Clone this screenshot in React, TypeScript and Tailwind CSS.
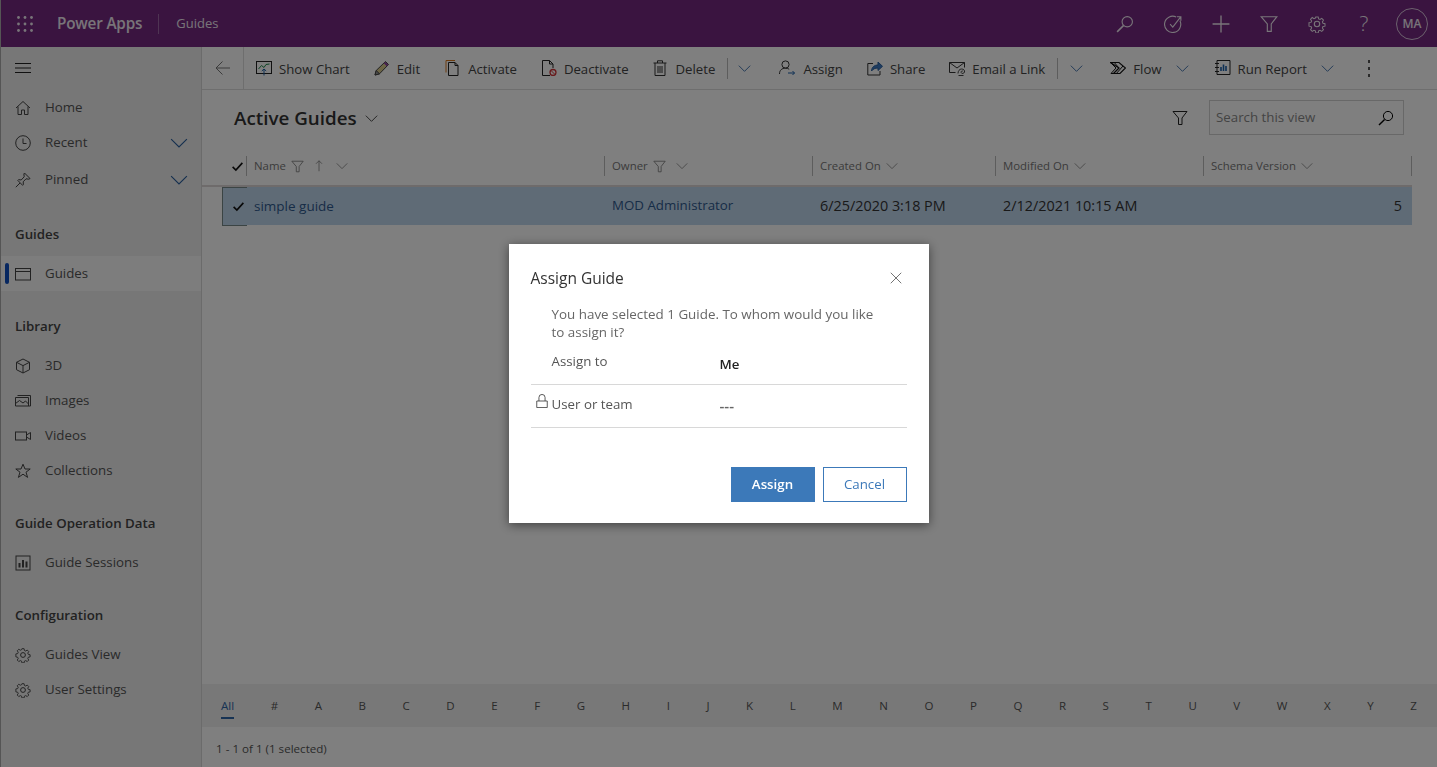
import { ReactNode } from 'react'

const FONT = { fontFamily: '"Open Sans", "Noto Sans", sans-serif' }

function Icon({ size = 16, box = 16, className = '', children }: { size?: number; box?: number; className?: string; children: ReactNode }) {
  return (
    <svg width={size} height={size} viewBox={`0 0 ${box} ${box}`} fill="none" stroke="currentColor" strokeWidth="1" className={`shrink-0 ${className}`}>
      {children}
    </svg>
  )
}

const Chevron = ({ size = 13, className = '' }: { size?: number; className?: string }) => (
  <Icon size={size} className={className}><path d="M1 4.5 8 11.5 15 4.5" /></Icon>
)
const Funnel = ({ size = 14, className = '' }: { size?: number; className?: string }) => (
  <Icon size={size} className={className}><path d="M1 1.5h14L10 8v6.5H6.5V8z" /></Icon>
)
const Gear = ({ size = 16 }: { size?: number }) => (
  <Icon size={size}>
    <circle cx="8" cy="8" r="2.4" />
    <path d="M6.8 1h2.4l.4 2 1.4.6 1.7-1.1 1.7 1.7-1.1 1.7.6 1.4 2 .4v2.4l-2 .4-.6 1.4 1.1 1.7-1.7 1.7-1.7-1.1-1.4.6-.4 2H6.8l-.4-2-1.4-.6-1.7 1.1-1.7-1.7 1.1-1.7-.6-1.4-2-.4V6.8l2-.4.6-1.4-1.1-1.7 1.7-1.7 1.7 1.1 1.4-.6z" transform="translate(.8 .8) scale(.9)" />
  </Icon>
)
const Lens = ({ size = 18 }: { size?: number }) => (
  <Icon size={size}><circle cx="10" cy="6" r="4.6" /><path d="M6.6 9.4 1 15" strokeWidth="1.4" /></Icon>
)

const sideIcons: Record<string, ReactNode> = {
  home: <Icon><path d="M1 8 8 1.5 15 8M3 6.5V14.5H6.5V10H9.5V14.5H13V6.5" /></Icon>,
  clock: <Icon><circle cx="8" cy="8" r="7.3" /><path d="M8 3.5V8.5H11.5" /></Icon>,
  pin: <Icon><path d="M9.5 1 15 6.5 13.8 7.2 11 6.8 8.2 9.8 8.4 12.6 7.6 13.3 2.8 8.4 3.6 7.6 6.2 8 9.2 4.8 8.9 2zM5 11 .8 15.2" /></Icon>,
  window: <Icon><rect x=".5" y="2.5" width="15" height="11.5" /><path d="M.5 5.5h15" /></Icon>,
  cube: <Icon><path d="M8 1 14.5 4.3V11.7L8 15 1.5 11.7V4.3zM1.5 4.3 8 7.6 14.5 4.3M8 7.6V15" /></Icon>,
  images: <Icon><path d="M2.5 2.5h13V13H.5V4.5h13v8.5M.5 10.5 4.5 7.5 8 10 10.5 8 13.5 11" /></Icon>,
  video: <Icon><rect x=".5" y="4" width="11" height="8" /><path d="M11.5 7 15.5 4.5V11.5L11.5 9" /></Icon>,
  star: <Icon><path d="M8 1.2 10 6h5.2l-4.2 3.2 1.6 5.2L8 11.2l-4.6 3.2L5 9.2.8 6H6z" /></Icon>,
  chart: <Icon><rect x="1" y="1" width="14" height="14" /><path d="M4.5 12.5V8M8 12.5V5M11.5 12.5V6.5" strokeWidth="2" /></Icon>,
  gear: <Gear />,
}

function SideItem({ icon, label, chevron, active }: { icon: string; label: string; chevron?: boolean; active?: boolean }) {
  return (
    <div className={`relative flex h-[35px] items-center pl-[14px] pr-[13px] text-[13.3px] text-[#555] ${active ? 'bg-[#fafafa]' : ''}`}>
      {active && <span className="absolute left-[4px] top-[7px] h-[21px] w-[4px] rounded-sm bg-[#0f4fc0]" />}
      <span className="w-[30px] text-[#444]">{sideIcons[icon]}</span>
      <span>{label}</span>
      {chevron && <Chevron size={18} className="ml-auto text-[#2a5f9e]" />}
    </div>
  )
}

function SideHeading({ label, top }: { label: string; top: string }) {
  return <div className={`pl-[14px] text-[13.3px] font-semibold leading-[18px] text-[#444] ${top}`}>{label}</div>
}

function Sidebar() {
  return (
    <aside className="flex w-[201px] shrink-0 flex-col border-r border-[#d6d6d6] bg-[#eeeeee]">
      <div className="flex h-[42px] items-center pl-[14px] text-[#222]">
        <svg width="16" height="10" viewBox="0 0 16 10" stroke="currentColor"><path d="M0 .5h16M0 5h16M0 9.5h16" /></svg>
      </div>
      <div className="pt-[1px]">
        <SideItem icon="home" label="Home" />
        <SideItem icon="clock" label="Recent" chevron />
        <div className="mt-[2px]"><SideItem icon="pin" label="Pinned" chevron /></div>
      </div>
      <SideHeading label="Guides" top="mt-[28px]" />
      <div className="mt-[13px]"><SideItem icon="window" label="Guides" active /></div>
      <SideHeading label="Library" top="mt-[26px]" />
      <div className="mt-[13px]">
        <SideItem icon="cube" label="3D" />
        <SideItem icon="images" label="Images" />
        <SideItem icon="video" label="Videos" />
        <SideItem icon="star" label="Collections" />
      </div>
      <SideHeading label="Guide Operation Data" top="mt-[26px]" />
      <div className="mt-[13px]"><SideItem icon="chart" label="Guide Sessions" /></div>
      <SideHeading label="Configuration" top="mt-[26px]" />
      <div className="mt-[13px]">
        <SideItem icon="gear" label="Guides View" />
        <SideItem icon="gear" label="User Settings" />
      </div>
    </aside>
  )
}

function TopBar() {
  return (
    <header className="flex h-[47px] shrink-0 items-center bg-[#742880] pl-[16px] pr-[9px] text-white">
      <svg width="16" height="16" viewBox="0 0 16 16" fill="currentColor" className="opacity-90">
        {[1.5, 8, 14.5].flatMap((y) => [1.5, 8, 14.5].map((x) => <circle key={`${x}-${y}`} cx={x} cy={y} r="1.4" />))}
      </svg>
      <span className="ml-[24px] text-[15.3px] font-semibold tracking-[-0.2px] opacity-90">Power Apps</span>
      <span className="ml-[16px] h-[20px] w-px bg-white/30" />
      <span className="ml-[17px] text-[13px] opacity-90">Guides</span>
      <div className="ml-auto flex items-center opacity-90">
        <Lens />
        <span className="ml-[30px]">
          <Icon size={18}><path d="M14.2 5.2A7.2 7.2 0 1 1 10.8 1.8M5.4 8.2 7.8 10.8 15 1.5M11.5 1.5H15V5" /></Icon>
        </span>
        <span className="ml-[30px]">
          <Icon size={18}><path d="M8 .5v15M.5 8h15" strokeWidth="1.2" /></Icon>
        </span>
        <span className="ml-[30px]"><Funnel size={18} /></span>
        <span className="ml-[30px]"><Gear size={18} /></span>
        <span className="ml-[32px] w-[12px] text-center text-[21px] font-light leading-none">?</span>
        <span className="ml-[26px] flex h-[32px] w-[32px] items-center justify-center rounded-full border border-white/80 text-[12px] font-semibold">MA</span>
      </div>
    </header>
  )
}

function Cmd({ icon, label, ml, iconW = 23 }: { icon: ReactNode; label: string; ml: string; iconW?: number }) {
  return (
    <div className={`flex items-center ${ml}`}>
      <span style={{ width: iconW }}>{icon}</span>
      <span className="mt-[3px] whitespace-nowrap text-[13.2px] text-[#444]">{label}</span>
    </div>
  )
}

function CommandBar() {
  return (
    <div className="flex h-[43px] shrink-0 items-center border-b border-[#dcdcdc] bg-white">
      <div className="flex h-full w-[42px] items-center justify-center border-r border-[#dcdcdc] text-[#777]">
        <Icon size={16}><path d="M15 8H1M7.5 1.5 1 8l6.5 6.5" /></Icon>
      </div>
      <Cmd ml="ml-[12px]" label="Show Chart" icon={
        <Icon><rect x=".5" y="1.5" width="15" height="12" stroke="#222" /><path d="M2.5 9 5.5 5.5 8 7.5 10 4.5 13.5 4" stroke="#1f8a4c" /><path d="M8 15.5V9M5.8 11 8 9l2.2 2" stroke="#1b5fa8" /></Icon>
      } />
      <Cmd ml="ml-[24px]" label="Edit" icon={
        <Icon>
          <path d="M1 15 2.2 10.5 11.5 1.5 14.5 4.5 5.5 13.8z" stroke="#444" fill="#d8c98a" />
          <path d="M10.5 2.5 13.5 5.5" stroke="#8a3fa0" strokeWidth="2" />
          <path d="M1 15 2.2 10.5 5.5 13.8z" fill="#999" stroke="#444" />
        </Icon>
      } />
      <Cmd ml="ml-[25px]" label="Activate" icon={
        <Icon><path d="M1 12.5V.5h9" stroke="#d9791f" /><path d="M3.5 15.5v-13h6.5l3 3v10z" stroke="#222" fill="white" /><path d="M10 2.5v3h3" stroke="#222" /></Icon>
      } />
      <Cmd ml="ml-[24px]" label="Deactivate" icon={
        <Icon><path d="M9 15.5H1.5V.5h7l3.5 3.5v4M8.5.5V4H12" stroke="#222" /><circle cx="12" cy="12.5" r="3" stroke="#d13438" strokeWidth="1.3" /><path d="M10 10.5l4 4" stroke="#d13438" /></Icon>
      } />
      <Cmd ml="ml-[23px]" label="Delete" iconW={24} icon={
        <Icon><path d="M1.5 3h13M5.5 3V.8h5V3M3 3v12.5h10V3M6 6v7M8 6v7M10 6v7" stroke="#333" /></Icon>
      } />
      <span className="ml-[12px] h-[21px] w-px bg-[#bbb]" />
      <Chevron className="ml-[10px] text-[#1f5a9e]" />
      <Cmd ml="ml-[28px]" label="Assign" iconW={24} icon={
        <Icon><circle cx="6.5" cy="4.5" r="3.6" stroke="#333" /><path d="M.5 14c0-4 2.5-5.8 6-5.8 1.5 0 2.8.4 3.7 1" stroke="#333" /><path d="M9 13h6.5M13.5 11l2 2-2 2" stroke="#1b5fa8" /></Icon>
      } />
      <Cmd ml="ml-[24px]" label="Share" icon={
        <Icon><path d="M6 3.5H.8v11.5H13v-4" stroke="#333" /><path d="M4.5 11c.2-4 3-6 6.5-6V2l4.5 4.3L11 10.5V8C8 8 6 9 4.5 11z" fill="#3b78c2" stroke="#2a5f9e" /></Icon>
      } />
      <Cmd ml="ml-[24px]" label="Email a Link" iconW={23} icon={
        <Icon>
          <path d="M6.5 12.5H.5V2.5h15v5M.5 2.5 8 8l7.5-5.5" stroke="#333" />
          <path d="M9 13.5c0-2.500 1.500-4.500 3.500-4.500s3.500 1.300 3 3-2.800 2-3.300.7.900-2.200 1.700-1.500M9.500 15.500h5" stroke="#444" />
        </Icon>
      } />
      <span className="ml-[12px] h-[21px] w-px bg-[#bbb]" />
      <Chevron className="ml-[12px] text-[#1f5a9e]" />
      <Cmd ml="ml-[27px]" label="Flow" icon={
        <Icon>
          <path d="M.5 2.500h8.500L15.500 8 10 13.500H3.500L9 8z" stroke="#111" strokeWidth="1.2" />
          <path d="M.5 2.500 6 8 1 13.500h2.500M6.800 13 13 6M4.500 2.800 9 8" stroke="#111" />
        </Icon>
      } />
      <Chevron className="ml-[14px] text-[#1f5a9e]" />
      <Cmd ml="ml-[26px]" label="Run Report" icon={
        <Icon><path d="M2 .5h13v14H2zM0 3.5h4M0 7.5h4M0 11.5h4" stroke="#222" /><path d="M6 11V7M8.5 11V4.5M11 11V6" stroke="#1b5fa8" strokeWidth="1.6" /></Icon>
      } />
      <Chevron className="ml-[14px] text-[#1f5a9e]" />
      <span className="ml-[34px] flex flex-col gap-[4px]">
        <i className="block h-[3px] w-[2px] bg-[#555]" />
        <i className="block h-[3px] w-[2px] bg-[#555]" />
        <i className="block h-[3px] w-[2px] bg-[#555]" />
      </span>
    </div>
  )
}

function ColHead({ label, width, filter, sort }: { label: string; width: string; filter?: boolean; sort?: boolean }) {
  return (
    <div className={`flex h-[20px] items-center border-r border-[#bbb] pl-[7px] text-[11.4px] text-[#777] ${width}`}>
      <span>{label}</span>
      {filter && <Funnel size={13} className="ml-[5px] text-[#777]" />}
      {sort && (
        <Icon size={12} className="ml-[9px] text-[#777]"><path d="M8 15V1M4 5l4-4 4 4" /></Icon>
      )}
      <Chevron size={12} className={`${sort ? 'ml-[11px]' : filter ? 'ml-[10px]' : 'ml-[5px]'} text-[#777]`} />
    </div>
  )
}

function Grid() {
  return (
    <div className="flex-1">
      <div className="flex h-[59px] items-center pb-[4px] pl-[32px] pr-[33px]">
        <span className="mt-[2px] text-[18.8px] font-semibold text-[#333]">Active Guides</span>
        <Chevron size={13} className="ml-[8px] mt-[2px] text-[#222]" />
        <Funnel size={16} className="ml-auto text-[#222]" />
        <div className="ml-[21px] flex h-[35px] w-[195px] items-center justify-between border border-[#d0d0d0] pl-[6px] pr-[9px]">
          <span className="mt-[1px] text-[13.3px] text-[#888]">Search this view</span>
          <Lens size={16} />
        </div>
      </div>
      <div className="mr-[25px] border-b-2 border-[#dcd6d6]">
        <div className="flex h-[36px] items-center pb-[2px] pl-[29px]">
          <div className="flex h-[20px] w-[15px] items-center text-[#111]">
            <Icon size={13}><path d="M2 8.5 6 12.5 14 3.5" strokeWidth="2" /></Icon>
          </div>
          <span className="h-[20px] w-px bg-[#bbb]" />
          <ColHead label="Name" width="w-[358px]" filter sort />
          <ColHead label="Owner" width="w-[208px]" filter />
          <ColHead label="Created On" width="w-[183px]" />
          <ColHead label="Modified On" width="w-[208px]" />
          <ColHead label="Schema Version" width="w-[208px]" />
        </div>
      </div>
      <div className="mr-[25px] pl-[20px]">
        <div className="flex h-[38px] bg-[#bfd6ec]">
          <div className="flex h-[39px] w-[25px] items-center border-y border-l border-[#788] pl-[9px] text-[#111]">
            <Icon size={13}><path d="M2 8.5 6 12.5 14 3.5" strokeWidth="2" /></Icon>
          </div>
          <div className="flex flex-1 items-center">
            <span className="w-[358px] pl-[7px] text-[13.5px] text-[#2f5a8f]">simple guide</span>
            <span className="w-[208px] pl-[7px] text-[13.3px] text-[#2f5a8f]">MOD Administrator</span>
            <span className="w-[183px] pl-[7px] text-[14.4px] text-[#333]">6/25/2020 3:18 PM</span>
            <span className="w-[208px] pl-[7px] text-[14.4px] text-[#333]">2/12/2021 10:15 AM</span>
            <span className="flex-1 pr-[10px] text-right text-[14.4px] text-[#333]">5</span>
          </div>
        </div>
      </div>
    </div>
  )
}

const LETTERS = ['#', ...'ABCDEFGHIJKLMNOPQRSTUVWXYZ'.split('')]

function JumpBar() {
  return (
    <>
      <div className="flex h-[43px] shrink-0 items-center justify-between bg-[#f0f0f0] pl-[19px] pr-[20px] text-[11.5px] text-[#555]">
        <span className="relative text-[#2f66a8]">
          All
          <i className="absolute -bottom-[5px] left-0 h-[2px] w-full bg-[#2f66a8]" />
        </span>
        {LETTERS.map((l) => <span key={l}>{l}</span>)}
      </div>
      <div className="flex h-[40px] shrink-0 items-center pl-[14px] pt-[4px] text-[11.6px] text-[#555]">1 - 1 of 1 (1 selected)</div>
    </>
  )
}

function Dialog() {
  return (
    <div className="fixed inset-0 flex items-center justify-center bg-black/50">
      <div className="flex h-[279px] w-[420px] flex-col bg-white px-[22px] shadow-[0_2px_10px_rgba(0,0,0,0.5)]">
        <div className="flex items-center justify-between pt-[23px]">
          <span className="text-[15.5px] leading-[22px] text-[#333]">Assign Guide</span>
          <Icon size={12} className="mr-[5px] text-[#444]"><path d="M1 1l14 14M15 1 1 15" /></Icon>
        </div>
        <p className="ml-[21px] mt-[16px] w-[325px] text-[13.4px] leading-[18px] text-[#666]">
          You have selected 1 Guide. To whom would you like to assign it?
        </p>
        <div className="mt-[10px] flex h-[34px] items-start border-b border-[#d8d8d8] pl-[21px] text-[13.3px]">
          <span className="w-[168px] pt-[1px] text-[#555]">Assign to</span>
          <span className="pt-[4px] font-semibold text-[#222]">Me</span>
        </div>
        <div className="flex h-[43px] items-start border-b border-[#d8d8d8] text-[13.3px]">
          <span className="w-[21px] pl-[4px] pt-[9px] text-[#444]">
            <Icon size={14}><path d="M2 8h12v7.500H2zM4.500 8V4a3.500 3.500 0 0 1 7 0v4" /></Icon>
          </span>
          <span className="w-[168px] pt-[10px] text-[#555]">User or team</span>
          <span className="pt-[9px] text-[15px] font-semibold text-[#666]">---</span>
        </div>
        <div className="mt-[39px] flex justify-end gap-[8px]">
          <button className="h-[35px] w-[84px] bg-[#3c79b9] pt-[1px] text-[13.3px] font-semibold text-white">Assign</button>
          <button className="h-[35px] w-[84px] border border-[#3c79b9] pt-[1px] text-[13.3px] text-[#3c79b9]">Cancel</button>
        </div>
      </div>
    </div>
  )
}

export default function App() {
  return (
    <div className="relative flex h-screen w-full flex-col overflow-hidden bg-[#aaaaaa] pl-[1px]" style={FONT}>
      <TopBar />
      <div className="flex min-h-0 flex-1 bg-white">
        <Sidebar />
        <main className="flex min-w-0 flex-1 flex-col">
          <CommandBar />
          <Grid />
          <JumpBar />
        </main>
      </div>
      <Dialog />
    </div>
  )
}
